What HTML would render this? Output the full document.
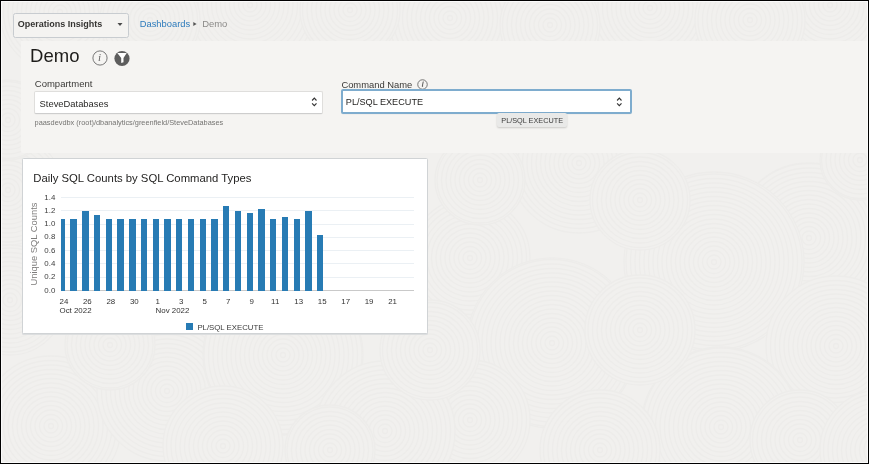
<!DOCTYPE html>
<html><head><meta charset="utf-8">
<style>
html,body{margin:0;padding:0;width:869px;height:464px;overflow:hidden;}
body{position:relative;background:#f1f0ee;font-family:"Liberation Sans",sans-serif;color:#161513;}
.a{position:absolute;white-space:nowrap;line-height:1;}
#root{position:absolute;left:0;top:0;width:869px;height:464px;will-change:transform;}
#frame{position:absolute;left:0;top:0;width:869px;height:464px;box-sizing:border-box;border:1px solid #000;z-index:50;pointer-events:none;}
#frame2{position:absolute;left:1px;top:1px;width:867px;height:462px;box-sizing:border-box;border:1px solid #fbfbfb;z-index:49;}
#appsel{position:absolute;left:13px;top:13px;width:116px;height:25px;box-sizing:border-box;border:1px solid #c8ccd0;border-radius:2.5px;background:#f4f3f1;}
#panel{position:absolute;left:21px;top:41px;width:846px;height:112px;background:#f5f4f2;border-radius:0 0 0 2px;}
.inp{position:absolute;box-sizing:border-box;background:#fff;border:1px solid #dfdedc;border-bottom-color:#cdcdcd;border-radius:2px;box-shadow:0 0.5px 0.5px rgba(0,0,0,0.05);}
#card{position:absolute;left:22px;top:158px;width:406px;height:176px;box-sizing:border-box;background:#fff;border:1px solid #d0d3d5;border-radius:1.5px;box-shadow:0 1px 0 #dcdedf;}
.yl{position:absolute;font-size:7.9px;color:#3d3d3d;text-align:right;width:20px;line-height:1;}
.xl{position:absolute;font-size:7.9px;color:#333;line-height:1;}
.bar{position:absolute;background:#277bb4;width:6.4px;}
.grid{position:absolute;left:61px;width:353px;height:1px;background:#ebf0f4;}
</style></head>
<body>
<div id="root">
<svg id="bgpat" width="869" height="464" viewBox="0 0 869 464" style="position:absolute;left:0;top:0"><g fill="none" stroke="#edecea" stroke-width="1.3"><circle cx="60" cy="12" r="60" fill="#f1f0ee"/><circle cx="60" cy="12" r="2.5"/><circle cx="60" cy="12" r="7.0"/><circle cx="60" cy="12" r="11.5"/><circle cx="60" cy="12" r="16.0"/><circle cx="60" cy="12" r="20.5"/><circle cx="60" cy="12" r="25.0"/><circle cx="60" cy="12" r="29.5"/><circle cx="60" cy="12" r="34.0"/><circle cx="60" cy="12" r="38.5"/><circle cx="60" cy="12" r="43.0"/><circle cx="60" cy="12" r="47.5"/><circle cx="60" cy="12" r="52.0"/><circle cx="60" cy="12" r="56.5"/><circle cx="250" cy="5" r="70" fill="#f1f0ee"/><circle cx="250" cy="5" r="2.5"/><circle cx="250" cy="5" r="7.0"/><circle cx="250" cy="5" r="11.5"/><circle cx="250" cy="5" r="16.0"/><circle cx="250" cy="5" r="20.5"/><circle cx="250" cy="5" r="25.0"/><circle cx="250" cy="5" r="29.5"/><circle cx="250" cy="5" r="34.0"/><circle cx="250" cy="5" r="38.5"/><circle cx="250" cy="5" r="43.0"/><circle cx="250" cy="5" r="47.5"/><circle cx="250" cy="5" r="52.0"/><circle cx="250" cy="5" r="56.5"/><circle cx="250" cy="5" r="61.0"/><circle cx="250" cy="5" r="65.5"/><circle cx="450" cy="18" r="70" fill="#f1f0ee"/><circle cx="450" cy="18" r="2.5"/><circle cx="450" cy="18" r="7.0"/><circle cx="450" cy="18" r="11.5"/><circle cx="450" cy="18" r="16.0"/><circle cx="450" cy="18" r="20.5"/><circle cx="450" cy="18" r="25.0"/><circle cx="450" cy="18" r="29.5"/><circle cx="450" cy="18" r="34.0"/><circle cx="450" cy="18" r="38.5"/><circle cx="450" cy="18" r="43.0"/><circle cx="450" cy="18" r="47.5"/><circle cx="450" cy="18" r="52.0"/><circle cx="450" cy="18" r="56.5"/><circle cx="450" cy="18" r="61.0"/><circle cx="450" cy="18" r="65.5"/><circle cx="650" cy="8" r="70" fill="#f1f0ee"/><circle cx="650" cy="8" r="2.5"/><circle cx="650" cy="8" r="7.0"/><circle cx="650" cy="8" r="11.5"/><circle cx="650" cy="8" r="16.0"/><circle cx="650" cy="8" r="20.5"/><circle cx="650" cy="8" r="25.0"/><circle cx="650" cy="8" r="29.5"/><circle cx="650" cy="8" r="34.0"/><circle cx="650" cy="8" r="38.5"/><circle cx="650" cy="8" r="43.0"/><circle cx="650" cy="8" r="47.5"/><circle cx="650" cy="8" r="52.0"/><circle cx="650" cy="8" r="56.5"/><circle cx="650" cy="8" r="61.0"/><circle cx="650" cy="8" r="65.5"/><circle cx="830" cy="5" r="60" fill="#f1f0ee"/><circle cx="830" cy="5" r="2.5"/><circle cx="830" cy="5" r="7.0"/><circle cx="830" cy="5" r="11.5"/><circle cx="830" cy="5" r="16.0"/><circle cx="830" cy="5" r="20.5"/><circle cx="830" cy="5" r="25.0"/><circle cx="830" cy="5" r="29.5"/><circle cx="830" cy="5" r="34.0"/><circle cx="830" cy="5" r="38.5"/><circle cx="830" cy="5" r="43.0"/><circle cx="830" cy="5" r="47.5"/><circle cx="830" cy="5" r="52.0"/><circle cx="830" cy="5" r="56.5"/><circle cx="150" cy="20" r="50" fill="#f1f0ee"/><circle cx="150" cy="20" r="2.5"/><circle cx="150" cy="20" r="7.0"/><circle cx="150" cy="20" r="11.5"/><circle cx="150" cy="20" r="16.0"/><circle cx="150" cy="20" r="20.5"/><circle cx="150" cy="20" r="25.0"/><circle cx="150" cy="20" r="29.5"/><circle cx="150" cy="20" r="34.0"/><circle cx="150" cy="20" r="38.5"/><circle cx="150" cy="20" r="43.0"/><circle cx="150" cy="20" r="47.5"/><circle cx="350" cy="10" r="50" fill="#f1f0ee"/><circle cx="350" cy="10" r="2.5"/><circle cx="350" cy="10" r="7.0"/><circle cx="350" cy="10" r="11.5"/><circle cx="350" cy="10" r="16.0"/><circle cx="350" cy="10" r="20.5"/><circle cx="350" cy="10" r="25.0"/><circle cx="350" cy="10" r="29.5"/><circle cx="350" cy="10" r="34.0"/><circle cx="350" cy="10" r="38.5"/><circle cx="350" cy="10" r="43.0"/><circle cx="350" cy="10" r="47.5"/><circle cx="550" cy="25" r="50" fill="#f1f0ee"/><circle cx="550" cy="25" r="2.5"/><circle cx="550" cy="25" r="7.0"/><circle cx="550" cy="25" r="11.5"/><circle cx="550" cy="25" r="16.0"/><circle cx="550" cy="25" r="20.5"/><circle cx="550" cy="25" r="25.0"/><circle cx="550" cy="25" r="29.5"/><circle cx="550" cy="25" r="34.0"/><circle cx="550" cy="25" r="38.5"/><circle cx="550" cy="25" r="43.0"/><circle cx="550" cy="25" r="47.5"/><circle cx="750" cy="20" r="55" fill="#f1f0ee"/><circle cx="750" cy="20" r="2.5"/><circle cx="750" cy="20" r="7.0"/><circle cx="750" cy="20" r="11.5"/><circle cx="750" cy="20" r="16.0"/><circle cx="750" cy="20" r="20.5"/><circle cx="750" cy="20" r="25.0"/><circle cx="750" cy="20" r="29.5"/><circle cx="750" cy="20" r="34.0"/><circle cx="750" cy="20" r="38.5"/><circle cx="750" cy="20" r="43.0"/><circle cx="750" cy="20" r="47.5"/><circle cx="750" cy="20" r="52.0"/><circle cx="8" cy="190" r="55" fill="#f1f0ee"/><circle cx="8" cy="190" r="2.5"/><circle cx="8" cy="190" r="7.0"/><circle cx="8" cy="190" r="11.5"/><circle cx="8" cy="190" r="16.0"/><circle cx="8" cy="190" r="20.5"/><circle cx="8" cy="190" r="25.0"/><circle cx="8" cy="190" r="29.5"/><circle cx="8" cy="190" r="34.0"/><circle cx="8" cy="190" r="38.5"/><circle cx="8" cy="190" r="43.0"/><circle cx="8" cy="190" r="47.5"/><circle cx="8" cy="190" r="52.0"/><circle cx="10" cy="300" r="55" fill="#f1f0ee"/><circle cx="10" cy="300" r="2.5"/><circle cx="10" cy="300" r="7.0"/><circle cx="10" cy="300" r="11.5"/><circle cx="10" cy="300" r="16.0"/><circle cx="10" cy="300" r="20.5"/><circle cx="10" cy="300" r="25.0"/><circle cx="10" cy="300" r="29.5"/><circle cx="10" cy="300" r="34.0"/><circle cx="10" cy="300" r="38.5"/><circle cx="10" cy="300" r="43.0"/><circle cx="10" cy="300" r="47.5"/><circle cx="10" cy="300" r="52.0"/><circle cx="8" cy="120" r="40" fill="#f1f0ee"/><circle cx="8" cy="120" r="2.5"/><circle cx="8" cy="120" r="7.0"/><circle cx="8" cy="120" r="11.5"/><circle cx="8" cy="120" r="16.0"/><circle cx="8" cy="120" r="20.5"/><circle cx="8" cy="120" r="25.0"/><circle cx="8" cy="120" r="29.5"/><circle cx="8" cy="120" r="34.0"/><circle cx="8" cy="120" r="38.5"/><circle cx="470" cy="258" r="60" fill="#f1f0ee"/><circle cx="470" cy="258" r="2.5"/><circle cx="470" cy="258" r="7.0"/><circle cx="470" cy="258" r="11.5"/><circle cx="470" cy="258" r="16.0"/><circle cx="470" cy="258" r="20.5"/><circle cx="470" cy="258" r="25.0"/><circle cx="470" cy="258" r="29.5"/><circle cx="470" cy="258" r="34.0"/><circle cx="470" cy="258" r="38.5"/><circle cx="470" cy="258" r="43.0"/><circle cx="470" cy="258" r="47.5"/><circle cx="470" cy="258" r="52.0"/><circle cx="470" cy="258" r="56.5"/><circle cx="579" cy="163" r="70" fill="#f1f0ee"/><circle cx="579" cy="163" r="2.5"/><circle cx="579" cy="163" r="7.0"/><circle cx="579" cy="163" r="11.5"/><circle cx="579" cy="163" r="16.0"/><circle cx="579" cy="163" r="20.5"/><circle cx="579" cy="163" r="25.0"/><circle cx="579" cy="163" r="29.5"/><circle cx="579" cy="163" r="34.0"/><circle cx="579" cy="163" r="38.5"/><circle cx="579" cy="163" r="43.0"/><circle cx="579" cy="163" r="47.5"/><circle cx="579" cy="163" r="52.0"/><circle cx="579" cy="163" r="56.5"/><circle cx="579" cy="163" r="61.0"/><circle cx="579" cy="163" r="65.5"/><circle cx="809" cy="238" r="75" fill="#f1f0ee"/><circle cx="809" cy="238" r="2.5"/><circle cx="809" cy="238" r="7.0"/><circle cx="809" cy="238" r="11.5"/><circle cx="809" cy="238" r="16.0"/><circle cx="809" cy="238" r="20.5"/><circle cx="809" cy="238" r="25.0"/><circle cx="809" cy="238" r="29.5"/><circle cx="809" cy="238" r="34.0"/><circle cx="809" cy="238" r="38.5"/><circle cx="809" cy="238" r="43.0"/><circle cx="809" cy="238" r="47.5"/><circle cx="809" cy="238" r="52.0"/><circle cx="809" cy="238" r="56.5"/><circle cx="809" cy="238" r="61.0"/><circle cx="809" cy="238" r="65.5"/><circle cx="809" cy="238" r="70.0"/><circle cx="809" cy="238" r="74.5"/><circle cx="552" cy="343" r="85" fill="#f1f0ee"/><circle cx="552" cy="343" r="2.5"/><circle cx="552" cy="343" r="7.0"/><circle cx="552" cy="343" r="11.5"/><circle cx="552" cy="343" r="16.0"/><circle cx="552" cy="343" r="20.5"/><circle cx="552" cy="343" r="25.0"/><circle cx="552" cy="343" r="29.5"/><circle cx="552" cy="343" r="34.0"/><circle cx="552" cy="343" r="38.5"/><circle cx="552" cy="343" r="43.0"/><circle cx="552" cy="343" r="47.5"/><circle cx="552" cy="343" r="52.0"/><circle cx="552" cy="343" r="56.5"/><circle cx="552" cy="343" r="61.0"/><circle cx="552" cy="343" r="65.5"/><circle cx="552" cy="343" r="70.0"/><circle cx="552" cy="343" r="74.5"/><circle cx="552" cy="343" r="79.0"/><circle cx="552" cy="343" r="83.5"/><circle cx="714" cy="262" r="90" fill="#f1f0ee"/><circle cx="714" cy="262" r="2.5"/><circle cx="714" cy="262" r="7.0"/><circle cx="714" cy="262" r="11.5"/><circle cx="714" cy="262" r="16.0"/><circle cx="714" cy="262" r="20.5"/><circle cx="714" cy="262" r="25.0"/><circle cx="714" cy="262" r="29.5"/><circle cx="714" cy="262" r="34.0"/><circle cx="714" cy="262" r="38.5"/><circle cx="714" cy="262" r="43.0"/><circle cx="714" cy="262" r="47.5"/><circle cx="714" cy="262" r="52.0"/><circle cx="714" cy="262" r="56.5"/><circle cx="714" cy="262" r="61.0"/><circle cx="714" cy="262" r="65.5"/><circle cx="714" cy="262" r="70.0"/><circle cx="714" cy="262" r="74.5"/><circle cx="714" cy="262" r="79.0"/><circle cx="714" cy="262" r="83.5"/><circle cx="714" cy="262" r="88.0"/><circle cx="836" cy="346" r="70" fill="#f1f0ee"/><circle cx="836" cy="346" r="2.5"/><circle cx="836" cy="346" r="7.0"/><circle cx="836" cy="346" r="11.5"/><circle cx="836" cy="346" r="16.0"/><circle cx="836" cy="346" r="20.5"/><circle cx="836" cy="346" r="25.0"/><circle cx="836" cy="346" r="29.5"/><circle cx="836" cy="346" r="34.0"/><circle cx="836" cy="346" r="38.5"/><circle cx="836" cy="346" r="43.0"/><circle cx="836" cy="346" r="47.5"/><circle cx="836" cy="346" r="52.0"/><circle cx="836" cy="346" r="56.5"/><circle cx="836" cy="346" r="61.0"/><circle cx="836" cy="346" r="65.5"/><circle cx="721" cy="427" r="80" fill="#f1f0ee"/><circle cx="721" cy="427" r="2.5"/><circle cx="721" cy="427" r="7.0"/><circle cx="721" cy="427" r="11.5"/><circle cx="721" cy="427" r="16.0"/><circle cx="721" cy="427" r="20.5"/><circle cx="721" cy="427" r="25.0"/><circle cx="721" cy="427" r="29.5"/><circle cx="721" cy="427" r="34.0"/><circle cx="721" cy="427" r="38.5"/><circle cx="721" cy="427" r="43.0"/><circle cx="721" cy="427" r="47.5"/><circle cx="721" cy="427" r="52.0"/><circle cx="721" cy="427" r="56.5"/><circle cx="721" cy="427" r="61.0"/><circle cx="721" cy="427" r="65.5"/><circle cx="721" cy="427" r="70.0"/><circle cx="721" cy="427" r="74.5"/><circle cx="721" cy="427" r="79.0"/><circle cx="600" cy="450" r="60" fill="#f1f0ee"/><circle cx="600" cy="450" r="2.5"/><circle cx="600" cy="450" r="7.0"/><circle cx="600" cy="450" r="11.5"/><circle cx="600" cy="450" r="16.0"/><circle cx="600" cy="450" r="20.5"/><circle cx="600" cy="450" r="25.0"/><circle cx="600" cy="450" r="29.5"/><circle cx="600" cy="450" r="34.0"/><circle cx="600" cy="450" r="38.5"/><circle cx="600" cy="450" r="43.0"/><circle cx="600" cy="450" r="47.5"/><circle cx="600" cy="450" r="52.0"/><circle cx="600" cy="450" r="56.5"/><circle cx="480" cy="180" r="45" fill="#f1f0ee"/><circle cx="480" cy="180" r="2.5"/><circle cx="480" cy="180" r="7.0"/><circle cx="480" cy="180" r="11.5"/><circle cx="480" cy="180" r="16.0"/><circle cx="480" cy="180" r="20.5"/><circle cx="480" cy="180" r="25.0"/><circle cx="480" cy="180" r="29.5"/><circle cx="480" cy="180" r="34.0"/><circle cx="480" cy="180" r="38.5"/><circle cx="480" cy="180" r="43.0"/><circle cx="640" cy="200" r="50" fill="#f1f0ee"/><circle cx="640" cy="200" r="2.5"/><circle cx="640" cy="200" r="7.0"/><circle cx="640" cy="200" r="11.5"/><circle cx="640" cy="200" r="16.0"/><circle cx="640" cy="200" r="20.5"/><circle cx="640" cy="200" r="25.0"/><circle cx="640" cy="200" r="29.5"/><circle cx="640" cy="200" r="34.0"/><circle cx="640" cy="200" r="38.5"/><circle cx="640" cy="200" r="43.0"/><circle cx="640" cy="200" r="47.5"/><circle cx="470" cy="420" r="60" fill="#f1f0ee"/><circle cx="470" cy="420" r="2.5"/><circle cx="470" cy="420" r="7.0"/><circle cx="470" cy="420" r="11.5"/><circle cx="470" cy="420" r="16.0"/><circle cx="470" cy="420" r="20.5"/><circle cx="470" cy="420" r="25.0"/><circle cx="470" cy="420" r="29.5"/><circle cx="470" cy="420" r="34.0"/><circle cx="470" cy="420" r="38.5"/><circle cx="470" cy="420" r="43.0"/><circle cx="470" cy="420" r="47.5"/><circle cx="470" cy="420" r="52.0"/><circle cx="470" cy="420" r="56.5"/><circle cx="860" cy="160" r="40" fill="#f1f0ee"/><circle cx="860" cy="160" r="2.5"/><circle cx="860" cy="160" r="7.0"/><circle cx="860" cy="160" r="11.5"/><circle cx="860" cy="160" r="16.0"/><circle cx="860" cy="160" r="20.5"/><circle cx="860" cy="160" r="25.0"/><circle cx="860" cy="160" r="29.5"/><circle cx="860" cy="160" r="34.0"/><circle cx="860" cy="160" r="38.5"/><circle cx="800" cy="440" r="50" fill="#f1f0ee"/><circle cx="800" cy="440" r="2.5"/><circle cx="800" cy="440" r="7.0"/><circle cx="800" cy="440" r="11.5"/><circle cx="800" cy="440" r="16.0"/><circle cx="800" cy="440" r="20.5"/><circle cx="800" cy="440" r="25.0"/><circle cx="800" cy="440" r="29.5"/><circle cx="800" cy="440" r="34.0"/><circle cx="800" cy="440" r="38.5"/><circle cx="800" cy="440" r="43.0"/><circle cx="800" cy="440" r="47.5"/><circle cx="640" cy="330" r="55" fill="#f1f0ee"/><circle cx="640" cy="330" r="2.5"/><circle cx="640" cy="330" r="7.0"/><circle cx="640" cy="330" r="11.5"/><circle cx="640" cy="330" r="16.0"/><circle cx="640" cy="330" r="20.5"/><circle cx="640" cy="330" r="25.0"/><circle cx="640" cy="330" r="29.5"/><circle cx="640" cy="330" r="34.0"/><circle cx="640" cy="330" r="38.5"/><circle cx="640" cy="330" r="43.0"/><circle cx="640" cy="330" r="47.5"/><circle cx="640" cy="330" r="52.0"/><circle cx="51" cy="426" r="70" fill="#f1f0ee"/><circle cx="51" cy="426" r="2.5"/><circle cx="51" cy="426" r="7.0"/><circle cx="51" cy="426" r="11.5"/><circle cx="51" cy="426" r="16.0"/><circle cx="51" cy="426" r="20.5"/><circle cx="51" cy="426" r="25.0"/><circle cx="51" cy="426" r="29.5"/><circle cx="51" cy="426" r="34.0"/><circle cx="51" cy="426" r="38.5"/><circle cx="51" cy="426" r="43.0"/><circle cx="51" cy="426" r="47.5"/><circle cx="51" cy="426" r="52.0"/><circle cx="51" cy="426" r="56.5"/><circle cx="51" cy="426" r="61.0"/><circle cx="51" cy="426" r="65.5"/><circle cx="167" cy="391" r="70" fill="#f1f0ee"/><circle cx="167" cy="391" r="2.5"/><circle cx="167" cy="391" r="7.0"/><circle cx="167" cy="391" r="11.5"/><circle cx="167" cy="391" r="16.0"/><circle cx="167" cy="391" r="20.5"/><circle cx="167" cy="391" r="25.0"/><circle cx="167" cy="391" r="29.5"/><circle cx="167" cy="391" r="34.0"/><circle cx="167" cy="391" r="38.5"/><circle cx="167" cy="391" r="43.0"/><circle cx="167" cy="391" r="47.5"/><circle cx="167" cy="391" r="52.0"/><circle cx="167" cy="391" r="56.5"/><circle cx="167" cy="391" r="61.0"/><circle cx="167" cy="391" r="65.5"/><circle cx="283" cy="355" r="80" fill="#f1f0ee"/><circle cx="283" cy="355" r="2.5"/><circle cx="283" cy="355" r="7.0"/><circle cx="283" cy="355" r="11.5"/><circle cx="283" cy="355" r="16.0"/><circle cx="283" cy="355" r="20.5"/><circle cx="283" cy="355" r="25.0"/><circle cx="283" cy="355" r="29.5"/><circle cx="283" cy="355" r="34.0"/><circle cx="283" cy="355" r="38.5"/><circle cx="283" cy="355" r="43.0"/><circle cx="283" cy="355" r="47.5"/><circle cx="283" cy="355" r="52.0"/><circle cx="283" cy="355" r="56.5"/><circle cx="283" cy="355" r="61.0"/><circle cx="283" cy="355" r="65.5"/><circle cx="283" cy="355" r="70.0"/><circle cx="283" cy="355" r="74.5"/><circle cx="283" cy="355" r="79.0"/><circle cx="223" cy="446" r="60" fill="#f1f0ee"/><circle cx="223" cy="446" r="2.5"/><circle cx="223" cy="446" r="7.0"/><circle cx="223" cy="446" r="11.5"/><circle cx="223" cy="446" r="16.0"/><circle cx="223" cy="446" r="20.5"/><circle cx="223" cy="446" r="25.0"/><circle cx="223" cy="446" r="29.5"/><circle cx="223" cy="446" r="34.0"/><circle cx="223" cy="446" r="38.5"/><circle cx="223" cy="446" r="43.0"/><circle cx="223" cy="446" r="47.5"/><circle cx="223" cy="446" r="52.0"/><circle cx="223" cy="446" r="56.5"/><circle cx="385" cy="431" r="70" fill="#f1f0ee"/><circle cx="385" cy="431" r="2.5"/><circle cx="385" cy="431" r="7.0"/><circle cx="385" cy="431" r="11.5"/><circle cx="385" cy="431" r="16.0"/><circle cx="385" cy="431" r="20.5"/><circle cx="385" cy="431" r="25.0"/><circle cx="385" cy="431" r="29.5"/><circle cx="385" cy="431" r="34.0"/><circle cx="385" cy="431" r="38.5"/><circle cx="385" cy="431" r="43.0"/><circle cx="385" cy="431" r="47.5"/><circle cx="385" cy="431" r="52.0"/><circle cx="385" cy="431" r="56.5"/><circle cx="385" cy="431" r="61.0"/><circle cx="385" cy="431" r="65.5"/><circle cx="880" cy="450" r="60" fill="#f1f0ee"/><circle cx="880" cy="450" r="2.5"/><circle cx="880" cy="450" r="7.0"/><circle cx="880" cy="450" r="11.5"/><circle cx="880" cy="450" r="16.0"/><circle cx="880" cy="450" r="20.5"/><circle cx="880" cy="450" r="25.0"/><circle cx="880" cy="450" r="29.5"/><circle cx="880" cy="450" r="34.0"/><circle cx="880" cy="450" r="38.5"/><circle cx="880" cy="450" r="43.0"/><circle cx="880" cy="450" r="47.5"/><circle cx="880" cy="450" r="52.0"/><circle cx="880" cy="450" r="56.5"/><circle cx="110" cy="345" r="45" fill="#f1f0ee"/><circle cx="110" cy="345" r="2.5"/><circle cx="110" cy="345" r="7.0"/><circle cx="110" cy="345" r="11.5"/><circle cx="110" cy="345" r="16.0"/><circle cx="110" cy="345" r="20.5"/><circle cx="110" cy="345" r="25.0"/><circle cx="110" cy="345" r="29.5"/><circle cx="110" cy="345" r="34.0"/><circle cx="110" cy="345" r="38.5"/><circle cx="110" cy="345" r="43.0"/><circle cx="430" cy="350" r="50" fill="#f1f0ee"/><circle cx="430" cy="350" r="2.5"/><circle cx="430" cy="350" r="7.0"/><circle cx="430" cy="350" r="11.5"/><circle cx="430" cy="350" r="16.0"/><circle cx="430" cy="350" r="20.5"/><circle cx="430" cy="350" r="25.0"/><circle cx="430" cy="350" r="29.5"/><circle cx="430" cy="350" r="34.0"/><circle cx="430" cy="350" r="38.5"/><circle cx="430" cy="350" r="43.0"/><circle cx="430" cy="350" r="47.5"/><circle cx="330" cy="450" r="45" fill="#f1f0ee"/><circle cx="330" cy="450" r="2.5"/><circle cx="330" cy="450" r="7.0"/><circle cx="330" cy="450" r="11.5"/><circle cx="330" cy="450" r="16.0"/><circle cx="330" cy="450" r="20.5"/><circle cx="330" cy="450" r="25.0"/><circle cx="330" cy="450" r="29.5"/><circle cx="330" cy="450" r="34.0"/><circle cx="330" cy="450" r="38.5"/><circle cx="330" cy="450" r="43.0"/></g></svg>
<div id="frame2"></div>
<div id="frame"></div>

<!-- top app selector -->
<div id="appsel"></div>
<div class="a" style="left:17.7px;top:19.5px;font-size:9px;font-weight:bold;color:#363533;">Operations Insights</div>
<svg class="a" style="left:117px;top:23px" width="6" height="3" viewBox="0 0 6 3"><path d="M0.5 0 L5.5 0 L3 3 Z" fill="#4a4a4a"/></svg>

<div class="a" style="left:139.7px;top:19.2px;font-size:9.4px;color:#2f7cbc;">Dashboards</div>
<svg class="a" style="left:192.5px;top:22.3px" width="4" height="4" viewBox="0 0 4 4"><path d="M0.3 0 L3.6 2 L0.3 4 Z" fill="#555"/></svg>
<div class="a" style="left:202.2px;top:19.45px;font-size:9.45px;color:#8b8a88;">Demo</div>

<!-- panel -->
<div id="panel"></div>
<div class="a" style="left:30.1px;top:47.0px;font-size:18.5px;color:#1d1c1a;">Demo</div>
<!-- info icon -->
<svg class="a" style="left:91.5px;top:50.2px" width="16" height="16" viewBox="0 0 16 16">
  <circle cx="8" cy="8" r="7.1" fill="none" stroke="#6a6a6a" stroke-width="0.9"/>
</svg>
<div class="a" style="left:98.1px;top:52.2px;font-family:'Liberation Serif',serif;font-style:italic;font-size:11px;color:#666;">i</div>
<!-- filter icon -->
<svg class="a" style="left:113.75px;top:50px" width="16" height="17" viewBox="0 0 16 17">
  <circle cx="8" cy="8.5" r="7.6" fill="#5d5d5d"/>
  <path d="M3.3 3.0 L12.7 3.0 L9.5 8.0 L9.5 12.2 L7.2 13.0 L7.2 8.0 Z" fill="#fff"/>
</svg>
<div class="a" style="left:34.8px;top:79.1px;font-size:9.5px;color:#3a3937;">Compartment</div>
<div class="inp" style="left:34px;top:91px;width:289px;height:23px;"></div>
<div class="a" style="left:39.6px;top:99px;font-size:9.4px;color:#2b2a28;">SteveDatabases</div>
<svg class="a" style="left:311.2px;top:97px" width="7" height="10" viewBox="0 0 7 10"><path d="M1.1 3.5 L3.3 1.2 L5.5 3.5 M1.1 6.3 L3.3 8.6 L5.5 6.3" fill="none" stroke="#333" stroke-width="1.15"/></svg>
<div class="a" style="left:34.6px;top:119.4px;font-size:7.37px;color:#757472;">paasdevdbx (root)/dbanalytics/greenfield/SteveDatabases</div>

<div class="a" style="left:341.4px;top:79.7px;font-size:9.4px;color:#3a3937;">Command Name</div>
<svg class="a" style="left:416.6px;top:78.5px" width="11" height="11" viewBox="0 0 11 11">
  <circle cx="5.5" cy="5.5" r="4.75" fill="none" stroke="#5e5e5e" stroke-width="0.85"/>
  <path d="M6.2 2.9 L5.3 7.2 Q5.1 7.9 5.8 7.4" fill="none" stroke="#4a4a4a" stroke-width="0.9" stroke-linecap="round"/>
</svg>
<div class="inp" style="left:341px;top:89px;width:291px;height:25px;border:2px solid #7eacce;"></div>
<div class="a" style="left:345.8px;top:97.8px;font-size:9.15px;color:#1f1e1c;">PL/SQL EXECUTE</div>
<svg class="a" style="left:615.9px;top:97.2px" width="7" height="10" viewBox="0 0 7 10"><path d="M1.1 3.5 L3.3 1.2 L5.5 3.5 M1.1 6.3 L3.3 8.6 L5.5 6.3" fill="none" stroke="#333" stroke-width="1.15"/></svg>

<!-- tooltip -->
<div class="a" style="left:497px;top:113px;width:70px;height:13.5px;background:#e9e9e8;border-radius:2px;box-shadow:0 1px 2px rgba(0,0,0,0.18);"></div>
<div class="a" style="left:501.3px;top:116.7px;font-size:7.3px;color:#3b3b3b;">PL/SQL EXECUTE</div>

<!-- chart card -->
<div id="card"></div>
<div class="a" style="left:33.3px;top:173.1px;font-size:11.3px;color:#252423;">Daily SQL Counts by SQL Command Types</div>

<!--CHART--><div id="chart">
<div class="grid" style="top:196.90px"></div>
<div class="grid" style="top:210.21px"></div>
<div class="grid" style="top:223.53px"></div>
<div class="grid" style="top:236.84px"></div>
<div class="grid" style="top:250.16px"></div>
<div class="grid" style="top:263.47px"></div>
<div class="grid" style="top:276.79px"></div>
<div class="a" style="left:61px;top:290.00px;width:353px;height:1.2px;background:#c9c9c9"></div>
<div class="yl" style="left:35.3px;top:193.51px">1.4</div>
<div class="yl" style="left:35.3px;top:206.83px">1.2</div>
<div class="yl" style="left:35.3px;top:220.14px">1.0</div>
<div class="yl" style="left:35.3px;top:233.46px">0.8</div>
<div class="yl" style="left:35.3px;top:246.77px">0.6</div>
<div class="yl" style="left:35.3px;top:260.08px">0.4</div>
<div class="yl" style="left:35.3px;top:273.40px">0.2</div>
<div class="yl" style="left:35.3px;top:286.71px">0.0</div>
<div class="bar" style="left:61.00px;width:4.10px;top:218.70px;height:71.90px"></div>
<div class="bar" style="left:70.44px;width:6.40px;top:219.00px;height:71.60px"></div>
<div class="bar" style="left:82.18px;width:6.40px;top:210.60px;height:80.00px"></div>
<div class="bar" style="left:93.92px;width:6.40px;top:214.70px;height:75.90px"></div>
<div class="bar" style="left:105.66px;width:6.40px;top:219.00px;height:71.60px"></div>
<div class="bar" style="left:117.40px;width:6.40px;top:219.00px;height:71.60px"></div>
<div class="bar" style="left:129.14px;width:6.40px;top:219.00px;height:71.60px"></div>
<div class="bar" style="left:140.88px;width:6.40px;top:219.00px;height:71.60px"></div>
<div class="bar" style="left:152.62px;width:6.40px;top:219.00px;height:71.60px"></div>
<div class="bar" style="left:164.36px;width:6.40px;top:219.00px;height:71.60px"></div>
<div class="bar" style="left:176.10px;width:6.40px;top:219.00px;height:71.60px"></div>
<div class="bar" style="left:187.84px;width:6.40px;top:219.00px;height:71.60px"></div>
<div class="bar" style="left:199.58px;width:6.40px;top:219.00px;height:71.60px"></div>
<div class="bar" style="left:211.32px;width:6.40px;top:219.00px;height:71.60px"></div>
<div class="bar" style="left:223.06px;width:6.40px;top:205.60px;height:85.00px"></div>
<div class="bar" style="left:234.80px;width:6.40px;top:210.60px;height:80.00px"></div>
<div class="bar" style="left:246.54px;width:6.40px;top:212.50px;height:78.10px"></div>
<div class="bar" style="left:258.28px;width:6.40px;top:208.75px;height:81.85px"></div>
<div class="bar" style="left:270.02px;width:6.40px;top:219.00px;height:71.60px"></div>
<div class="bar" style="left:281.76px;width:6.40px;top:216.60px;height:74.00px"></div>
<div class="bar" style="left:293.50px;width:6.40px;top:219.00px;height:71.60px"></div>
<div class="bar" style="left:305.24px;width:6.40px;top:210.60px;height:80.00px"></div>
<div class="bar" style="left:316.98px;width:6.40px;top:234.75px;height:55.85px"></div>
<div class="xl" style="left:43.90px;width:40px;text-align:center;top:297.91px">24</div>
<div class="xl" style="left:67.38px;width:40px;text-align:center;top:297.91px">26</div>
<div class="xl" style="left:90.86px;width:40px;text-align:center;top:297.91px">28</div>
<div class="xl" style="left:114.34px;width:40px;text-align:center;top:297.91px">30</div>
<div class="xl" style="left:137.82px;width:40px;text-align:center;top:297.91px">1</div>
<div class="xl" style="left:161.30px;width:40px;text-align:center;top:297.91px">3</div>
<div class="xl" style="left:184.78px;width:40px;text-align:center;top:297.91px">5</div>
<div class="xl" style="left:208.26px;width:40px;text-align:center;top:297.91px">7</div>
<div class="xl" style="left:231.74px;width:40px;text-align:center;top:297.91px">9</div>
<div class="xl" style="left:255.22px;width:40px;text-align:center;top:297.91px">11</div>
<div class="xl" style="left:278.70px;width:40px;text-align:center;top:297.91px">13</div>
<div class="xl" style="left:302.18px;width:40px;text-align:center;top:297.91px">15</div>
<div class="xl" style="left:325.66px;width:40px;text-align:center;top:297.91px">17</div>
<div class="xl" style="left:349.14px;width:40px;text-align:center;top:297.91px">19</div>
<div class="xl" style="left:372.62px;width:40px;text-align:center;top:297.91px">21</div>
<div class="xl" style="left:59.51px;top:307.31px">Oct 2022</div>
<div class="xl" style="left:155.62px;top:307.31px">Nov 2022</div>
<div style="position:absolute;white-space:nowrap;line-height:1;left:33.9px;top:244px;font-size:9.4px;color:#7d7c7b;transform:translate(-50%,-50%) rotate(-90deg);">Unique SQL Counts</div>
<div class="a" style="left:186px;top:323.3px;width:7px;height:7px;background:#277bb4"></div>
<div class="a" style="left:197.4px;top:323.60px;font-size:7.8px;color:#3a3a3a">PL/SQL EXECUTE</div>
</div><!--/CHART-->
</div>
</body></html>
